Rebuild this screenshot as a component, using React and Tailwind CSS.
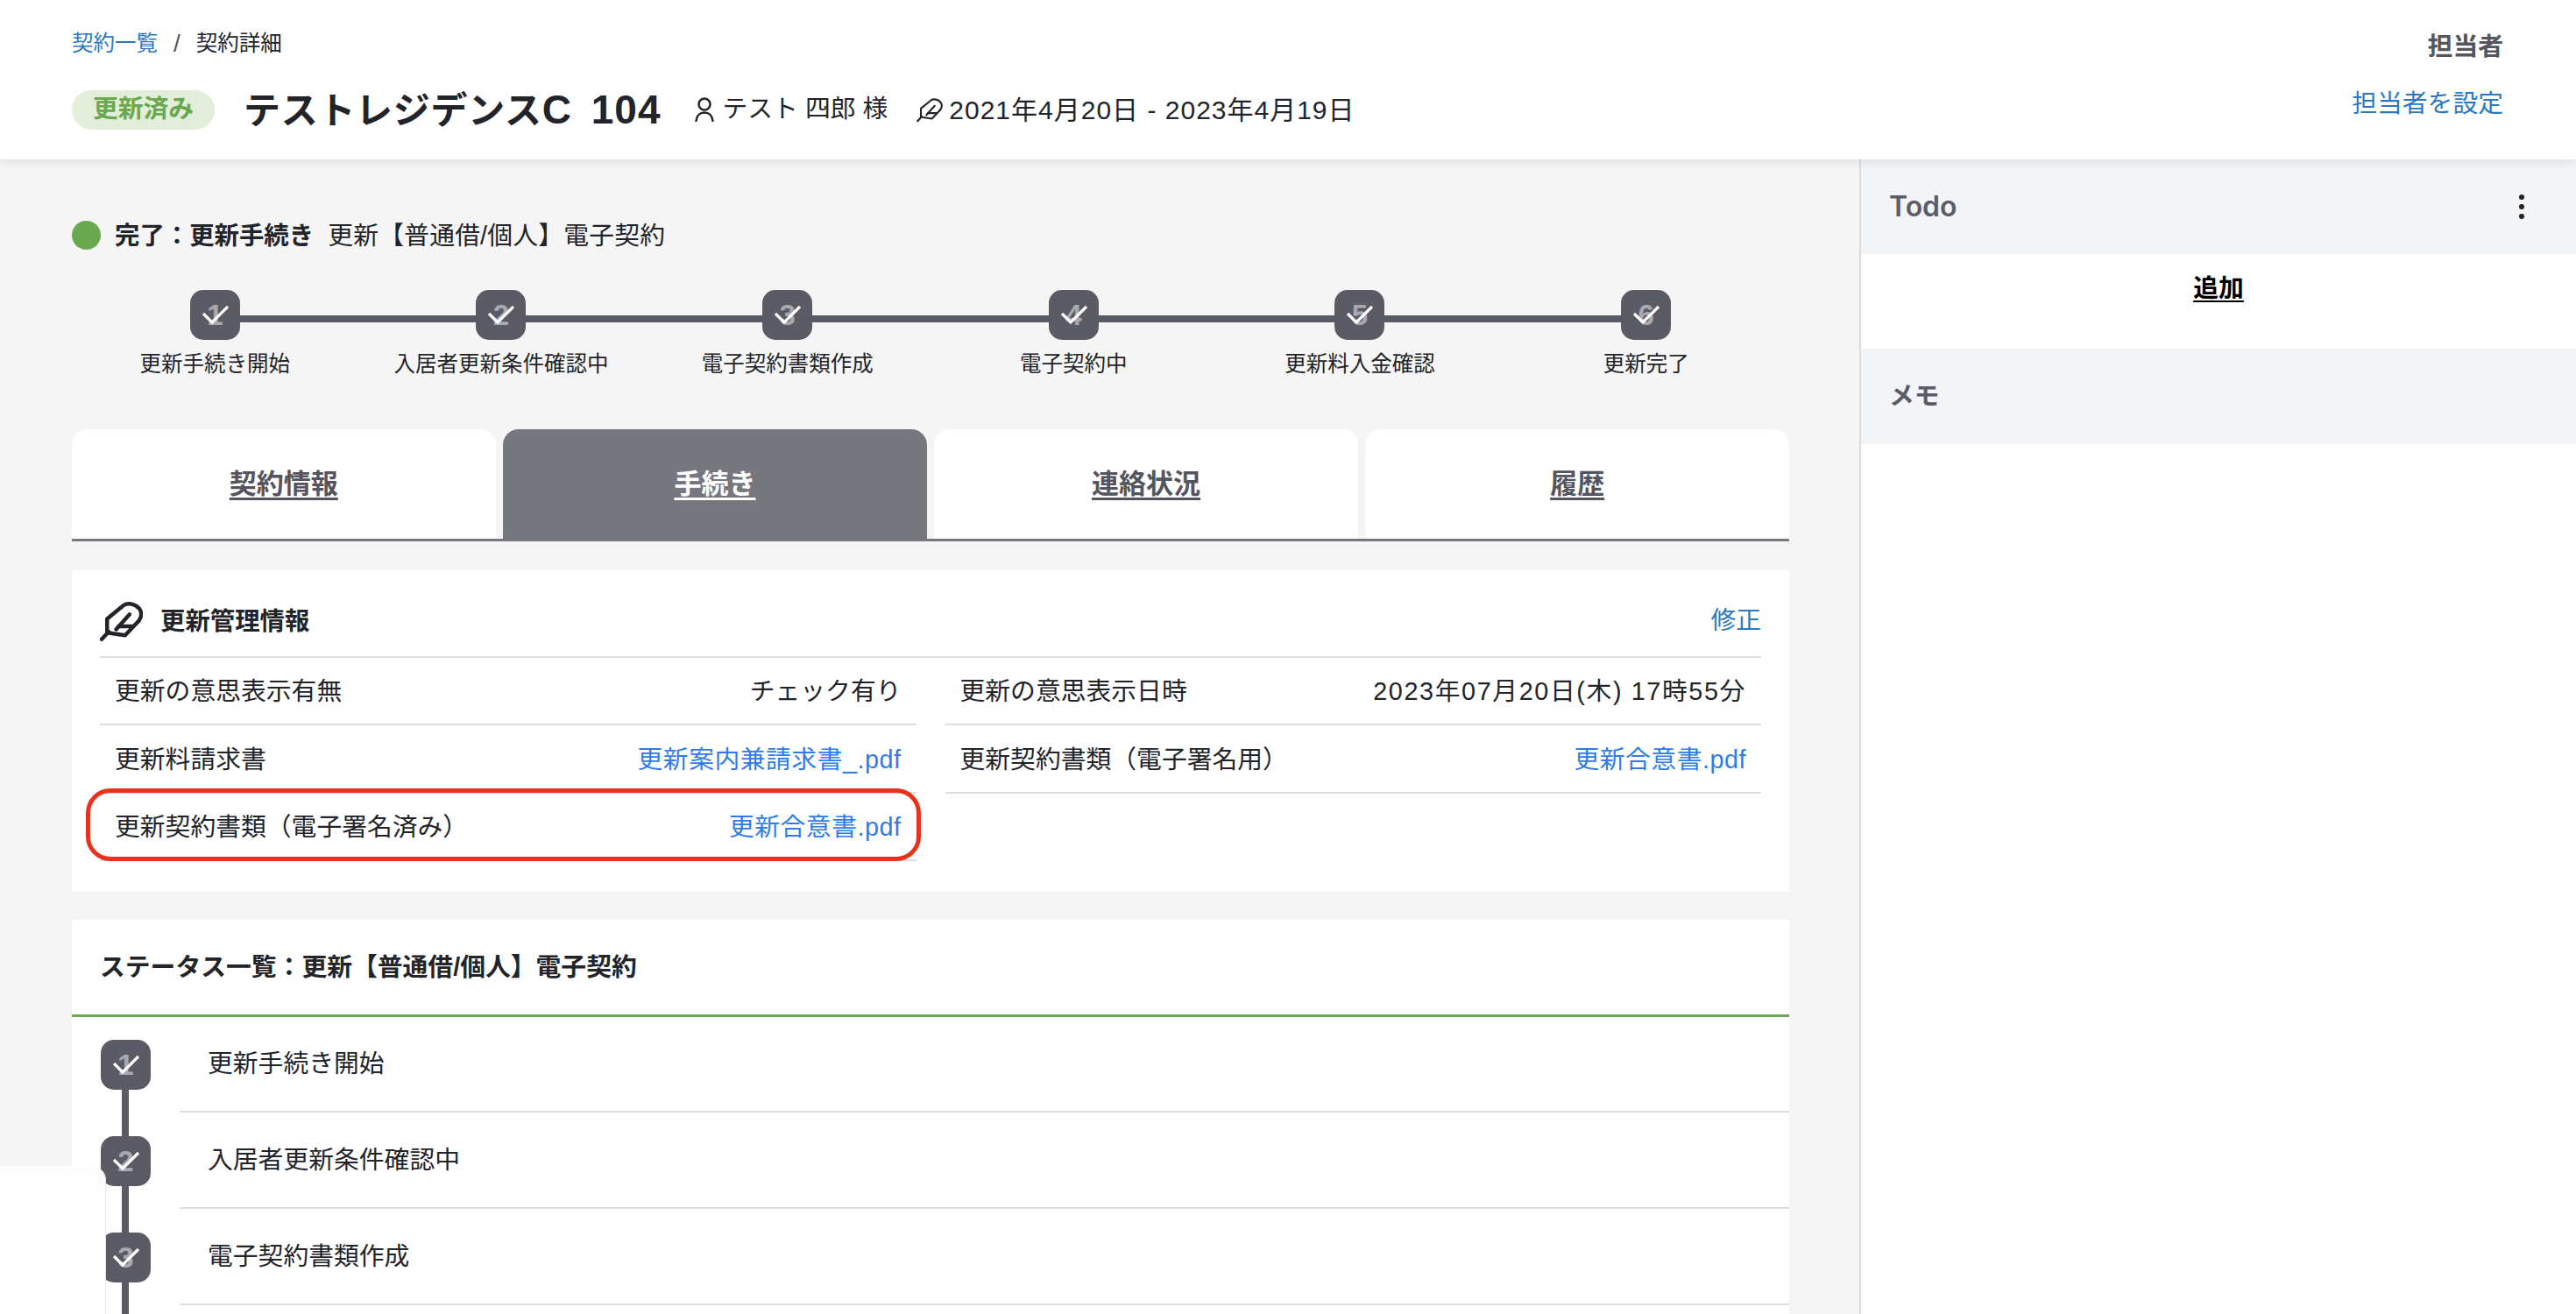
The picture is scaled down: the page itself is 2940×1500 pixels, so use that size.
import { MoreVertical } from 'lucide-react'

const steps = ['更新手続き開始', '入居者更新条件確認中', '電子契約書類作成', '電子契約中', '更新料入金確認', '更新完了']
const tabs = ['契約情報', '手続き', '連絡状況', '履歴']

function Feather({ className, sw = 13 }) {
  return (
    <svg viewBox="-4 -4 143 133" fill="none" stroke="currentColor" strokeWidth={sw} strokeLinecap="round" strokeLinejoin="round" className={className}>
      <path d="M2 123 L25 98" />
      <path d="M20 100 L20 55 L75 10 C90 0 115 5 128 22 C140 40 130 60 118 70 L80 110 L25 102" />
      <path d="M95 40 L50 90" />
      <path d="M58 80 L106 80" />
    </svg>
  )
}

function User({ className }) {
  return (
    <svg viewBox="0 0 22 28" fill="none" stroke="currentColor" strokeWidth="2.5" strokeLinecap="round" className={className}>
      <circle cx="11" cy="8" r="6.5" />
      <path d="M1.5 27 C2 21 6 17.5 11 17.5 C16 17.5 20 21 20.5 27" />
    </svg>
  )
}

function StepIcon({ n }) {
  return (
    <div className="relative flex h-[57px] w-[57px] shrink-0 items-center justify-center rounded-[15px] bg-[#5b5b65]">
      <span className="text-[33px] font-bold leading-none text-[#a9a9af]">{n}</span>
      <svg viewBox="0 0 57 57" fill="none" stroke="white" strokeWidth="3.2" className="absolute inset-0 h-[57px] w-[57px]">
        <path d="M15 27 L25 37 L43 19" />
      </svg>
    </div>
  )
}

function InfoRow({ label, value, link, wide }) {
  return (
    <div className="flex h-[77.6px] items-center justify-between border-b-2 border-[#dedede] px-[17px] pt-[3px]">
      <span>{label}</span>
      {link ? <a className="tracking-[0.5px] text-[#2f7bea]">{value}</a> : <span className={wide ? 'tracking-[1.6px]' : ''}>{value}</span>}
    </div>
  )
}

export default function App() {
  return (
    <div className="relative flex h-[1500px] flex-col overflow-hidden bg-[#f5f5f5] text-[28.8px] text-[#222429] [font-family:'Liberation_Sans','Noto_Sans_CJK_JP',sans-serif]">
      {/* Header */}
      <header className="relative z-10 flex h-[182px] shrink-0 justify-between bg-white pl-[82px] pr-[83px] shadow-[0_2px_12px_rgba(0,0,0,0.1)]">
        <div>
          <div className="mt-[34px] flex h-[32px] items-center text-[24.5px] leading-none">
            <a className="text-[#2b78c2]">契約一覧</a>
            <span className="mx-[18px] text-[28px] text-[#555]">/</span>
            <span>契約詳細</span>
          </div>
          <div className="mt-[36px] flex items-center">
            <span className="flex h-[45px] w-[163px] items-center justify-center rounded-full bg-[#e2eeda] font-bold text-[#6aa84f]">更新済み</span>
            <h1 className="ml-[33px] text-[42px] font-bold leading-none tracking-[0.7px]">
              テストレジデンス<span className="text-[46px] tracking-[1px] [word-spacing:8px]">C 104</span>
            </h1>
            <User className="ml-[38px] h-[28px] w-[22px]" />
            <span className="ml-[10px]">テスト 四郎 様</span>
            <Feather sw={10} className="ml-[33px] h-[29px] w-[30px]" />
            <span className="ml-[7px] text-[30px] tracking-[1px]">2021年4月20日 - 2023年4月19日</span>
          </div>
        </div>
        <div className="flex flex-col items-end pt-[34px] leading-[38px]">
          <span className="font-bold text-[#55555f]">担当者</span>
          <a className="mt-[27px] text-[#2b78c2]">担当者を設定</a>
        </div>
      </header>

      <div className="flex min-h-0 flex-1">
        {/* Main */}
        <main className="w-[2122px] shrink-0 pl-[82px] pr-[80px]">
          <div className="mt-[70px] flex h-[33px] items-center">
            <span className="h-[33px] w-[33px] rounded-full bg-[#6aa84f]" />
            <span className="ml-[16px] pt-[2px] text-[28.4px] font-bold">完了：更新手続き</span>
            <span className="ml-[16px] pt-[2px] tracking-[0.2px]">更新【普通借/個人】電子契約</span>
          </div>

          {/* Stepper */}
          <div className="relative mt-[46px] grid grid-cols-6">
            <div className="absolute left-[163px] right-[163px] top-[29px] h-[8px] bg-[#5b5b65]" />
            {steps.map((s, i) => (
              <div key={s} className="relative flex flex-col items-center">
                <StepIcon n={i + 1} />
                <span className="mt-[12px] text-[24.5px] leading-[32px]">{s}</span>
              </div>
            ))}
          </div>

          {/* Tabs */}
          <div className="mt-[58px] flex gap-[8.5px] border-b-[3.5px] border-[#77777f]">
            {tabs.map((t, i) => (
              <a key={t} className={`flex h-[125px] flex-1 items-center justify-center rounded-t-[18px] pt-[2px] text-[31px] font-bold underline underline-offset-[5px] ${i === 1 ? 'bg-[#77777f] text-white' : 'bg-white text-[#55555f]'}`}>
                {t}
              </a>
            ))}
          </div>

          {/* Renewal info */}
          <section className="mt-[32.5px] h-[367px] bg-white px-[32px]">
            <div className="flex h-[100px] items-center justify-between border-b-2 border-[#dedede] pt-[19px]">
              <div className="flex items-center">
                <Feather className="h-[46px] w-[49px] text-[#222429]" />
                <h2 className="ml-[20px] text-[28.4px] font-bold">更新管理情報</h2>
              </div>
              <a className="text-[#2b78c2]">修正</a>
            </div>
            <div className="grid grid-cols-2 gap-x-[33px]">
              <div className="relative">
                <InfoRow label="更新の意思表示有無" value="チェック有り" />
                <InfoRow label="更新料請求書" value="更新案内兼請求書_.pdf" link />
                <InfoRow label="更新契約書類（電子署名済み）" value="更新合意書.pdf" link />
                <div className="absolute bottom-0 left-[-16px] right-[-5px] top-[149px] rounded-[28px] border-[5px] border-[#e8321b]" />
              </div>
              <div>
                <InfoRow label="更新の意思表示日時" value="2023年07月20日(木) 17時55分" wide />
                <InfoRow label="更新契約書類（電子署名用）" value="更新合意書.pdf" link />
              </div>
            </div>
          </section>

          {/* Status list */}
          <section className="mt-[32px] bg-white">
            <h2 className="flex h-[111px] items-center border-b-[3px] border-[#6aa84f] px-[32px] pt-[3px] font-bold">ステータス一覧：更新【普通借/個人】電子契約</h2>
            <div className="relative mt-[26px]">
              <div className="absolute bottom-0 left-[57px] top-0 w-[8px] bg-[#5b5b65]" />
              {steps.slice(0, 3).map((s, i) => (
                <div key={s} className="relative flex h-[110px] pl-[33px]">
                  <StepIcon n={i + 1} />
                  <div className="ml-[33px] flex h-[83px] flex-1 items-center border-b-2 border-[#dedede] pb-[25px] pl-[32px]">{s}</div>
                </div>
              ))}
            </div>
          </section>
        </main>

        {/* Sidebar */}
        <aside className="flex-1 border-l-2 border-[#dcdcdc] bg-white">
          <div className="flex h-[108px] items-center justify-between bg-[#f3f4f6] pl-[32px] pr-[43px]">
            <span className="text-[32px] font-semibold text-[#5c5c66] [font-family:Inter,sans-serif]">Todo</span>
            <MoreVertical size={38} strokeWidth={1.8} className="text-[#222]" />
          </div>
          <div className="flex h-[108px] justify-center pt-[18px] font-bold text-black">
            <a className="h-fit underline underline-offset-[4px]">追加</a>
          </div>
          <div className="flex h-[109px] items-center bg-[#f3f4f6] pl-[32px] font-semibold text-[#5c5c66]">メモ</div>
        </aside>
      </div>

      {/* Overlay panel bottom left */}
      <div className="absolute bottom-0 left-0 z-20 h-[169px] w-[121px] rounded-tr-[16px] border-r border-[#e6e6e6] bg-[#fdfdfd]" />
    </div>
  )
}
